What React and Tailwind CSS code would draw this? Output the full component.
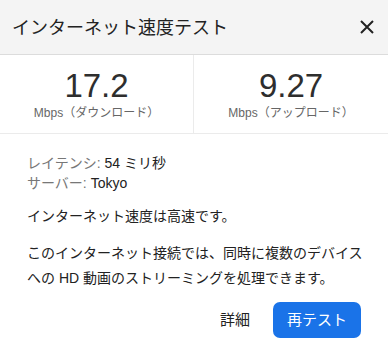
import React from 'react';

const font = { fontFamily: '"Liberation Sans", "Noto Sans CJK JP", sans-serif' };

function Stat({ value, label, border }) {
  return (
    <div className={`flex flex-col items-center pt-[13px] ${border ? 'border-r border-[#ebebeb]' : ''}`}>
      <div className="text-[33px] leading-[36px] text-[#2e2e2e]">{value}</div>
      <div className="text-[12px] leading-[16px] text-[#666] mt-[1px]">{label}</div>
    </div>
  );
}

export default function App() {
  return (
    <div className="w-[388px] h-[353px] bg-white overflow-hidden" style={font}>
      {/* Header */}
      <div className="h-[55px] bg-[#f4f4f4] border-b border-[#dcdcdc] flex items-center justify-between pl-[12px] pr-[13px]">
        <h1 className="text-[18px] text-[#222] pt-[3px]">インターネット速度テスト</h1>
        <button className="w-[16px] h-[16px] flex items-center justify-center">
          <svg width="14" height="14" viewBox="0 0 14 14" fill="none" stroke="#222" strokeWidth="2">
            <path d="M1 1L13 13M13 1L1 13" />
          </svg>
        </button>
      </div>

      {/* Speeds */}
      <div className="grid grid-cols-2 h-[79px] border-b border-[#ebebeb]">
        <Stat value="17.2" label="Mbps（ダウンロード）" border />
        <Stat value="9.27" label="Mbps（アップロード）" />
      </div>

      {/* Details */}
      <div className="pl-[27px] pr-[20px] pt-[19px] text-[14px] text-[#222]">
        <p className="leading-[20px]">
          <span className="text-[#777]">レイテンシ: </span>54 ミリ秒
        </p>
        <p className="leading-[20px]">
          <span className="text-[#777]">サーバー: </span>Tokyo
        </p>
        <p className="leading-[24px] mt-[11px]">インターネット速度は高速です。</p>
        <p className="leading-[25px] mt-[13px]">
          このインターネット接続では、同時に複数のデバイスへの HD 動画のストリーミングを処理できます。
        </p>
      </div>

      {/* Actions */}
      <div className="flex items-center justify-end gap-[20px] pr-[27px] mt-[11px]">
        <button className="text-[15px] text-[#222] px-[3px]">詳細</button>
        <button className="w-[88px] h-[36px] rounded-[7px] bg-[#1a73e8] text-white text-[15px]">再テスト</button>
      </div>
    </div>
  );
}
